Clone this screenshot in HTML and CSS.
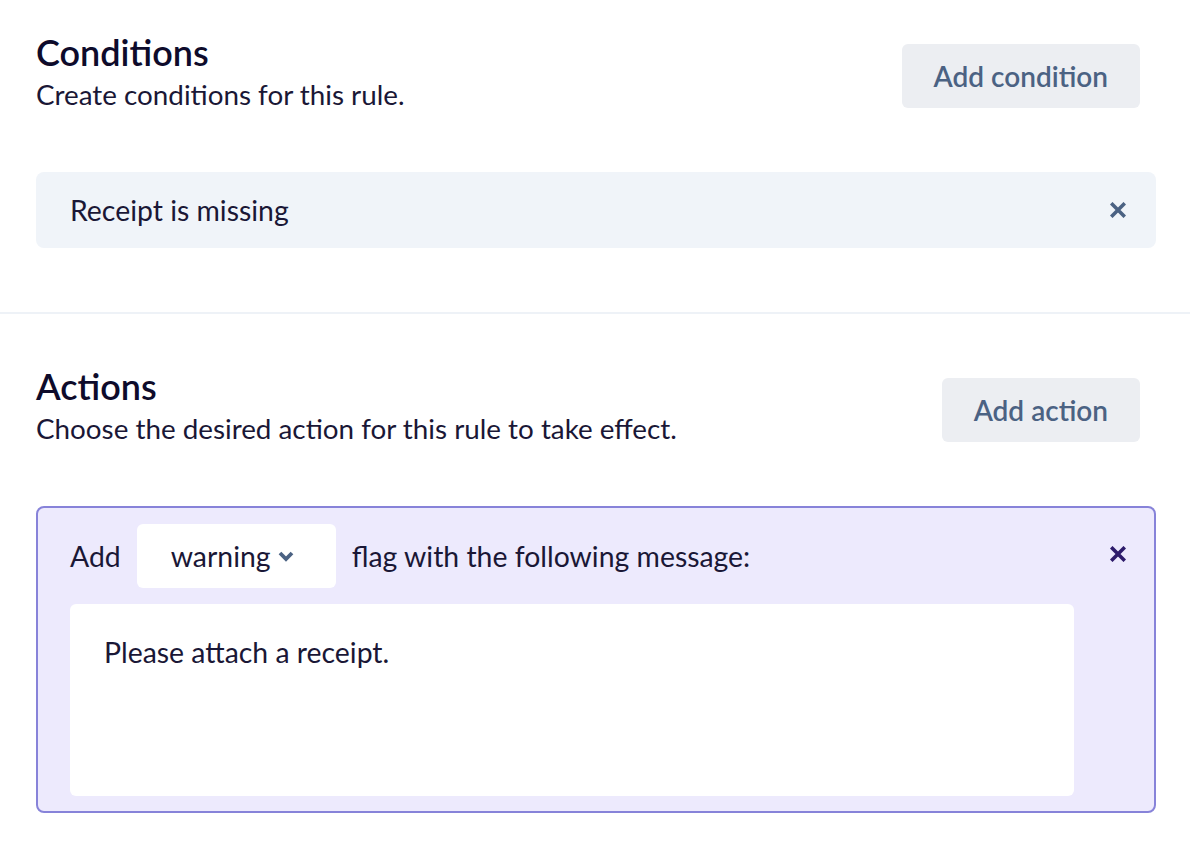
FILE: index.html
```html
<!DOCTYPE html>
<html lang="en">

<head>
  <meta charset="UTF-8">
  <meta name="viewport" content="width=device-width, initial-scale=1.0">
  <title>Rule editor</title>
  <link rel="stylesheet" href="styles.css">
</head>

<body>
  <div class="section">
    <div class="section-header">
      <div>
        <h2 class="section-title">Conditions</h2>
        <p class="section-text">Create conditions for this rule.</p>
      </div>
      <button class="add-button">Add condition</button>
    </div>
    <div class="condition">
      <span>Receipt is missing</span>
      <button class="close-button">
        <svg width="16" height="16" viewBox="0 0 16 16"><path d="M2.5 2.5L13.5 13.5M13.5 2.5L2.5 13.5" stroke="currentColor" stroke-width="3.6" stroke-linecap="square"/></svg>
      </button>
    </div>
  </div>

  <div class="section section-actions">
    <div class="section-header">
      <div>
        <h2 class="section-title">Actions</h2>
        <p class="section-text">Choose the desired action for this rule to take effect.</p>
      </div>
      <button class="add-button">Add action</button>
    </div>
    <div class="action">
      <div class="action-body">
        <div class="action-row">
          <span>Add</span>
          <div class="select">
            <span>warning</span>
            <svg width="16" height="12" viewBox="0 0 16 12"><path d="M2 3L8 9L14 3" fill="none" stroke="currentColor" stroke-width="3.8"/></svg>
          </div>
          <span>flag with the following message:</span>
        </div>
        <div class="message">Please attach a receipt.</div>
      </div>
      <button class="close-button close-purple">
        <svg width="16" height="16" viewBox="0 0 16 16"><path d="M2.5 2.5L13.5 13.5M13.5 2.5L2.5 13.5" stroke="currentColor" stroke-width="3.6" stroke-linecap="square"/></svg>
      </button>
    </div>
  </div>
</body>

</html>
```

FILE: styles.css
```css
body {
  font-family: Lato, "Open Sans", sans-serif;
  background-color: white;
  color: #1a1736;
  margin: 0;
  padding: 0;
}

.section {
  padding: 32px 34px 64px 36px;
}

.section-actions {
  border-top: 2px solid #eef2f7;
  padding-top: 52px;
}

.section-header {
  display: flex;
  justify-content: space-between;
  align-items: flex-start;
}

.section-title {
  margin: 0;
  font-size: 36px;
  line-height: 40px;
  font-weight: 600;
  color: #0e0b2b;
}

.section-text {
  margin: 6px 0 0;
  font-size: 27.8px;
  line-height: 34px;
}

.add-button {
  margin-top: 12px;
  margin-right: 16px;
  height: 64px;
  padding: 0 32px;
  font-family: inherit;
  font-size: 28px;
  font-weight: 600;
  color: #4b6283;
  background-color: #eceef2;
  border: none;
  border-radius: 6px;
  cursor: pointer;
}

.condition {
  margin-top: 60px;
  height: 76px;
  display: flex;
  align-items: center;
  justify-content: space-between;
  padding: 0 30px 0 34px;
  background-color: #f0f4f9;
  border-radius: 8px;
  font-size: 28.4px;
}

.close-button {
  display: flex;
  padding: 0;
  background: transparent;
  border: none;
  color: #4b6283;
  cursor: pointer;
}

.close-purple {
  color: #2d1b6b;
  margin-left: 36px;
  margin-top: 22px;
}

.action {
  margin-top: 60px;
  display: flex;
  align-items: flex-start;
  padding: 16px 28px 15px 32px;
  background-color: #edeafd;
  border: 2px solid #8783d9;
  border-radius: 8px;
  font-size: 28.4px;
}

.action-body {
  flex: 1;
}

.action-row {
  display: flex;
  align-items: center;
  gap: 16px;
}

.select {
  display: flex;
  align-items: center;
  gap: 7px;
  width: 199px;
  height: 64px;
  box-sizing: border-box;
  padding: 0 34px;
  background-color: white;
  border-radius: 6px;
  color: #1a1736;
}

.select svg {
  color: #4b6283;
}

.message {
  margin-top: 16px;
  height: 192px;
  box-sizing: border-box;
  padding: 31px 34px;
  line-height: 34px;
  background-color: white;
  border-radius: 6px;
}
```
